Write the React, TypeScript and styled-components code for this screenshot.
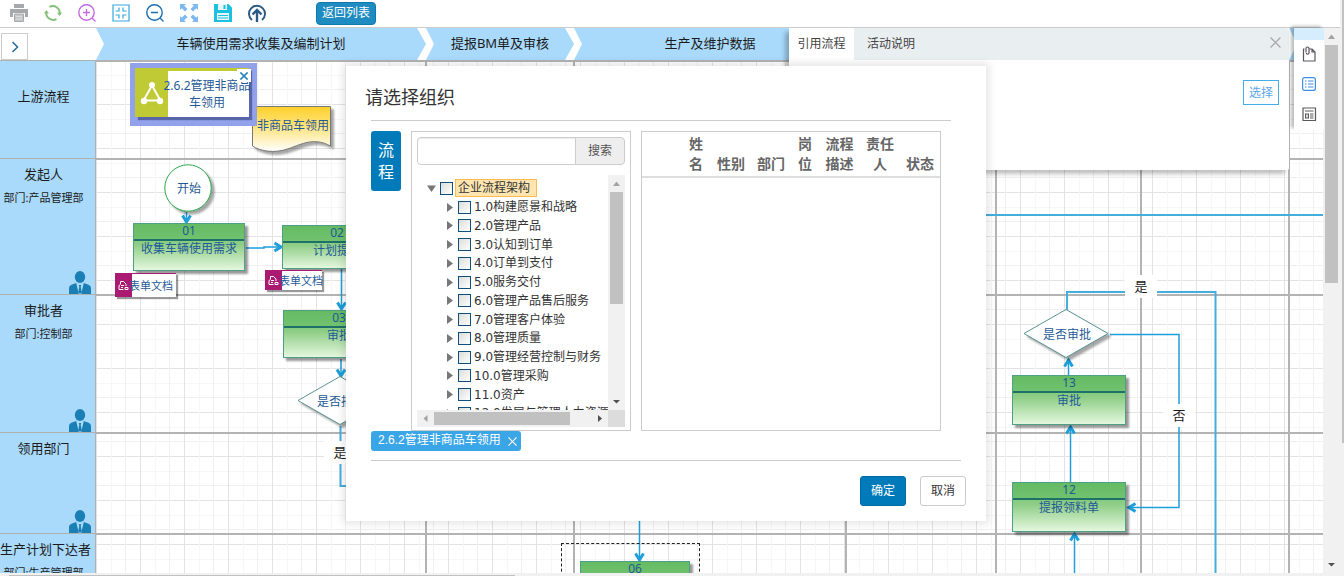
import React from "react";
import styled, { createGlobalStyle, css } from "styled-components";

const GlobalStyle = createGlobalStyle`
  *, *::before, *::after { box-sizing: border-box; }
  html, body, #root { height: 100%; }
  body {
    margin: 0;
    overflow: hidden;
    background: #fff;
    color: #333;
    font-family: "Noto Sans", "Noto Sans CJK SC", sans-serif;
    font-size: 12px;
  }
  button, input { font-family: inherit; }
  button { padding: 0; cursor: pointer; }
  h1, h2, h3, p, ul { margin: 0; padding: 0; font-weight: normal; }
`;

const blue = "#1c9fdb";

/* ---------- page frame ---------- */

const Page = styled.div`
  position: relative;
  display: grid;
  grid-template-columns: minmax(0, 1fr) 4px;
  grid-template-rows: minmax(0, 1fr) 3px;
  height: 100vh;
  background: #f1f1f1;
`;

const Workspace = styled.div`
  display: flex;
  flex-direction: column;
  background: #fff;
`;

const OuterTrack = styled.div`
  padding-left: 2px;
`;

const OuterThumb = styled.div`
  height: 443px;
  background: #c1c1c1;
`;

const BottomTrack = styled.div`
  padding: 2px 0 0 9px;
`;

const BottomThumb = styled.div`
  width: 506px;
  height: 1px;
  background: #c1c1c1;
`;

const Toolbar = styled.header`
  display: flex;
  align-items: center;
  flex: none;
  gap: 16px;
  height: 28px;
  padding: 0 0 1px 10px;
  border-bottom: 1px solid #ccc;
`;

const IconButton = styled.button`
  display: block;
  width: 18px;
  height: 18px;
  border: 0;
  background: none;
  svg { display: block; width: 18px; height: 18px; }
`;

const BackButton = styled.button`
  width: 60px;
  height: 23px;
  margin-left: 34px;
  border: 1px solid #0f79ad;
  border-radius: 4px;
  background: #1e8bc1;
  color: #fff;
  font-size: 12px;
  line-height: 20px;
`;

const Stage = styled.main`
  position: relative;
  display: flex;
  flex: 1;
  min-height: 0;
`;

/* ---------- swimlanes ---------- */

const LaneColumn = styled.aside`
  display: flex;
  flex-direction: column;
  flex: none;
  width: 96px;
  overflow: hidden;
`;

const Corner = styled.div`
  flex: none;
  height: 32px;
  padding: 5px 0 0 1px;
`;

const ExpandButton = styled.button`
  display: grid;
  place-items: center;
  width: 27px;
  height: 27px;
  border: 1px solid #ccc;
  background: #fff;
`;

const Lane = styled.section<{ $height: number }>`
  position: relative;
  flex: none;
  height: ${(p) => p.$height}px;
  padding-top: 5px;
  border: 1px solid #b0b0b0;
  border-width: 1px 1px 0 0;
  background: #a9dafb;
  color: #1b1b1b;
  text-align: center;
  white-space: nowrap;
`;

const LaneTitle = styled.h3<{ $low?: boolean }>`
  padding-right: 8px;
  margin-top: ${(p) => (p.$low ? 20 : 0)}px;
  font-size: 13px;
  line-height: 20px;
`;

const LaneDept = styled.p`
  padding-right: 8px;
  margin-top: 4px;
  font-size: 11px;
  line-height: 20px;
`;

const LanePerson = styled.svg`
  position: absolute;
  right: 4px;
  bottom: 0;
  width: 22px;
  height: 23px;
`;

const Board = styled.div`
  display: flex;
  flex-direction: column;
  flex: 1;
  min-width: 0;
  overflow: hidden;
`;

const Phases = styled.div`
  display: flex;
  flex: none;
  height: 32px;
`;

const Phase = styled.h3<{ $width: number }>`
  flex: none;
  width: ${(p) => p.$width + 8}px;
  margin-right: -8px;
  padding-right: 8px;
  background: #a9dafb;
  color: #1b1b1b;
  font-size: 13px;
  line-height: 31px;
  text-align: center;
  clip-path: polygon(0 0, calc(100% - 17px) 0, calc(100% - 8px) 50%, calc(100% - 17px) 100%, 0 100%, 8px 50%);
`;

const Diagram = styled.div`
  position: relative;
  flex: 1;
  overflow: hidden;
  background-image:
    repeating-linear-gradient(90deg, #e3e3e3 0 1px, transparent 1px 15px, #f7f7f7 15px 16px, transparent 16px 29px, #f0f0f0 29px 30px, transparent 30px 44px),
    repeating-linear-gradient(180deg, #e3e3e3 0 1px, transparent 1px 15px, #f7f7f7 15px 16px, transparent 16px 29px, #f0f0f0 29px 30px, transparent 30px 44px);
`;

const Wires = styled.svg`
  position: absolute;
  inset: 0;
  width: 1300px;
  height: 520px;
`;

type Box = { $x: number; $y: number; $w: number; $h: number };

const placed = css<Box>`
  position: absolute;
  left: ${(p) => p.$x}px;
  top: ${(p) => p.$y}px;
  width: ${(p) => p.$w}px;
  height: ${(p) => p.$h}px;
`;

const Activity = styled.div<Box>`
  ${placed}
  border: 1px solid #4f9f86;
  background: linear-gradient(#66bd63, #8fce87 45%, #e4f7de);
  box-shadow: 3px 3px 2px rgba(0, 0, 0, 0.4);
  color: #1f5a96;
  font-size: 12px;
  text-align: center;
`;

const ActivityNo = styled.div`
  height: 17px;
  border-bottom: 2px solid #1d7168;
  background: linear-gradient(#64bb62, #72c270);
  line-height: 14px;
`;

const ActivityName = styled.div`
  line-height: 16px;
  white-space: nowrap;
`;

const Shape = styled.div<Box>`
  ${placed}
  display: grid;
  place-items: center;
  padding: 2px 0 0 2px;
  color: #1f5a96;
  font-size: 12px;
  line-height: 16px;
  white-space: nowrap;
  svg {
    position: absolute;
    inset: 0;
    overflow: visible;
    filter: drop-shadow(3px 3px 1px rgba(0, 0, 0, 0.35));
  }
  span { position: relative; }
`;

const WireLabel = styled.span<Box>`
  ${placed}
  background: #fff;
  color: #1b1b1b;
  font-size: 13px;
  line-height: ${(p) => p.$h}px;
  text-align: center;
`;

const FormDoc = styled.div<Box>`
  ${placed}
  display: flex;
  border-top: 1px solid #aa1a72;
  background: #fff;
  box-shadow: 2px 2px 1px rgba(0, 0, 0, 0.4);
  color: #1f5a96;
  font-size: 11px;
  line-height: ${(p) => p.$h}px;
  white-space: nowrap;
`;

const FormDocIcon = styled.div`
  display: grid;
  place-items: center;
  flex: none;
  width: 17px;
  background: #aa1a72;
  svg { width: 11px; height: 11px; }
`;

const FormDocName = styled.span`
  margin-left: -3px;
`;

const Linked = styled.div<Box>`
  ${placed}
  border: 5px solid #91a1ea;
  border-width: 5px 8px 9px 5px;
`;

const LinkedBody = styled.div`
  display: flex;
  width: 114px;
  height: 49px;
  border-top: 3px solid #bfca34;
  background: #fff;
  box-shadow: 3px 3px 1px #5866a8;
  color: #1f5a96;
  font-size: 12px;
  line-height: 17px;
  text-align: center;
`;

const LinkedIcon = styled.div`
  display: grid;
  place-items: center;
  flex: none;
  width: 33px;
  margin-top: -3px;
  background: #bfca34;
`;

const LinkedName = styled.p`
  flex: 1;
  margin: 6px -3px 0 -6px;
  white-space: nowrap;
`;

const LinkedClose = styled.button`
  position: absolute;
  top: 1px;
  right: -2px;
  display: grid;
  place-items: center;
  width: 14px;
  height: 13px;
  border: 0;
  background: #fff;
`;

const Group = styled.div<Box>`
  ${placed}
  border: 1px dashed #222;
`;

/* ---------- scroll bars ---------- */

const VTrack = styled.div`
  display: flex;
  flex-direction: column;
  align-items: center;
  flex: none;
  width: 17px;
  background: #f1f1f1;
  svg { flex: none; width: 17px; height: 17px; }
`;

const VThumb = styled.div<{ $size: number }>`
  width: 13px;
  height: ${(p) => p.$size}px;
  margin-bottom: auto;
  background: #c1c1c1;
`;

const HTrack = styled.div`
  display: flex;
  align-items: center;
  flex: none;
  width: 191px;
  height: 17px;
  background: #f1f1f1;
  svg { flex: none; width: 17px; height: 17px; }
`;

const HThumb = styled.div`
  width: 136px;
  height: 13px;
  margin-right: auto;
  background: #c1c1c1;
`;

/* ---------- reference panel and side rail ---------- */

const RefPanel = styled.section`
  position: absolute;
  top: 0;
  right: 51px;
  width: 500px;
  border-radius: 2px 4px 2px 0;
  background: #fff;
  box-shadow: -4px 4px 4px rgba(0, 0, 0, 0.25);
`;

const TabBar = styled.div`
  display: flex;
  height: 32px;
  background: #e9eef1;
  border-radius: 2px 4px 0 0;
`;

const Tab = styled.button<{ $active?: boolean }>`
  width: ${(p) => (p.$active ? 65 : 74)}px;
  border: 0;
  background: ${(p) => (p.$active ? "#fff" : "transparent")};
  color: #444;
  font-size: 12px;
  line-height: 30px;
`;

const TabClose = styled.button`
  width: 28px;
  margin-left: auto;
  padding-bottom: 4px;
  border: 0;
  background: none;
  line-height: 0;
`;

const RefBody = styled.div`
  display: flex;
  justify-content: flex-end;
  height: 110px;
  padding: 20px 10px;
`;

const PickButton = styled.button`
  width: 36px;
  height: 25px;
  border: 1px solid #45ade6;
  background: #fff;
  color: #5aa7e8;
  font-size: 12px;
  line-height: 22px;
`;

const Rail = styled.nav`
  position: absolute;
  top: 0;
  right: 16px;
  display: flex;
  flex-direction: column;
  align-items: center;
  gap: 14px;
  width: 30px;
  height: 102px;
  padding-top: 6px;
  border-top: 12px solid #d6edfe;
  background: #fff;
  box-shadow: -3px -2px 3px rgba(0, 0, 0, 0.25);
`;

const RailButton = styled.button`
  width: 16px;
  height: 16px;
  border: 0;
  background: none;
  svg { display: block; width: 16px; height: 16px; }
`;

/* ---------- dialog ---------- */

const DialogLayer = styled.div`
  position: absolute;
  inset: 0;
  display: flex;
  justify-content: center;
  align-items: flex-start;
  padding: 66px 12px 0 0;
  pointer-events: none;
`;

const Dialog = styled.section`
  width: 640px;
  padding: 0 20px 15px 25px;
  background: #fff;
  box-shadow: 0 0 8px 3px rgba(0, 0, 0, 0.1);
  pointer-events: auto;
`;

const DialogTitle = styled.h2`
  height: 55px;
  margin-right: 15px;
  border-bottom: 1px solid #ccc;
  color: #333;
  font-size: 18px;
  line-height: 62px;
  text-indent: -6px;
`;

const DialogBody = styled.div`
  display: flex;
  gap: 10px;
  padding-top: 10px;
`;

const KindTab = styled.button`
  width: 30px;
  height: 60px;
  padding: 0 6px;
  border: 0;
  border-radius: 3px;
  background: #007ab8;
  color: #fff;
  font-size: 16px;
  line-height: 22px;
`;

const TreePanel = styled.div`
  width: 220px;
  height: 300px;
  padding: 5px;
  border: 1px solid #ccc;
`;

const Search = styled.form`
  display: flex;
  width: 208px;
  height: 28px;
`;

const SearchInput = styled.input`
  flex: 1;
  min-width: 0;
  border: 1px solid #ccc;
  border-radius: 4px 0 0 4px;
  box-shadow: inset 0 1px 1px rgba(0, 0, 0, 0.08);
`;

const SearchButton = styled.button`
  width: 50px;
  margin-left: -1px;
  border: 1px solid #ccc;
  border-radius: 0 4px 4px 0;
  background: #eee;
  color: #555;
  font-size: 12px;
  line-height: 24px;
`;

const TreeView = styled.div`
  display: grid;
  grid-template-columns: 191px 17px;
  grid-template-rows: 235px 17px;
  margin-top: 10px;
`;

const TreeClip = styled.div`
  overflow: hidden;
  padding: 4px 0 0 10px;
  color: #333;
  font-family: "DejaVu Sans", "Noto Sans CJK SC", sans-serif;
`;

const ScrollCorner = styled.div`
  background: #dcdcdc;
`;

const TreeRow = styled.label`
  display: flex;
  align-items: center;
  height: 18px;
  font-size: 12px;
  line-height: 16px;
  white-space: nowrap;
  svg { flex: none; width: 9px; height: 9px; margin-right: 4px; }
`;

const TreeList = styled.ul`
  display: grid;
  grid-template-rows: repeat(12, 1fr);
  height: 226px;
  padding: 1px 0 0 18px;
  list-style: none;
`;

const Check = styled.input`
  appearance: none;
  flex: none;
  width: 13px;
  height: 13px;
  margin: 0 3px 0 0;
  border: 1px solid #0d4f7d;
  background: linear-gradient(135deg, #dcdcd8, #fff);
`;

const RootName = styled.span`
  height: 18px;
  padding: 0 6px 0 2px;
  margin-left: -1px;
  border: 1px solid #ffb951;
  background: #ffe6b0;
`;

const TablePanel = styled.div`
  width: 300px;
  height: 300px;
  border: 1px solid #ccc;
`;

const PeopleTable = styled.table`
  width: 100%;
  table-layout: fixed;
  border-collapse: collapse;
  th {
    height: 45px;
    padding: 1px 6px 2px;
    border-bottom: 2px solid #ddd;
    color: #666;
    font-size: 14px;
    font-weight: bold;
    line-height: 20px;
    text-align: center;
    vertical-align: bottom;
    word-break: break-all;
  }
`;

const Chosen = styled.div`
  display: flex;
  height: 30px;
  margin-right: 5px;
  padding-bottom: 9px;
  border-bottom: 1px solid #ccc;
`;

const Tag = styled.span`
  display: flex;
  align-items: center;
  gap: 7px;
  width: 150px;
  height: 20px;
  padding-left: 7px;
  border-radius: 3px;
  background: #3aa6e8;
  color: #fff;
  font-family: "Liberation Sans", "Noto Sans CJK SC", sans-serif;
  line-height: 18px;
  white-space: nowrap;
`;

const TagText = styled.span`
  height: 20px;
`;

const TagClose = styled.button`
  width: 10px;
  height: 10px;
  border: 0;
  background: none;
  line-height: 0;
`;

const Actions = styled.footer`
  display: flex;
  justify-content: flex-end;
  gap: 14px;
  padding-top: 15px;
`;

const ActionButton = styled.button<{ $primary?: boolean }>`
  width: 46px;
  height: 30px;
  border: 1px solid ${(p) => (p.$primary ? "#006ca3" : "#ccc")};
  border-radius: 3px;
  background: ${(p) => (p.$primary ? "#007ab8" : "#fff")};
  color: ${(p) => (p.$primary ? "#fff" : "#333")};
  font-size: 12px;
  line-height: 26px;
`;

/* ---------- icons ---------- */

const Cross = ({ size, color, width = 1.2 }: { size: number; color: string; width?: number }) => (
  <svg width={size} height={size} viewBox="0 0 10 10" stroke={color} strokeWidth={width} fill="none">
    <path d="M0.5 0.5 9.5 9.5M9.5 0.5 0.5 9.5" />
  </svg>
);

const arrowPaths = {
  up: "M8.5 6.5 12 11H5Z",
  down: "M5 7h7L8.500 10.500Z",
  left: "M10.500 5v7L6.500 8.500Z",
  right: "M7 5v7L11 8.500Z",
};

const ScrollArrow = ({ dir, color }: { dir: keyof typeof arrowPaths; color: string }) => (
  <svg viewBox="0 0 17 17" fill={color}>
    <path d={arrowPaths[dir]} />
  </svg>
);

const Person = () => (
  <LanePerson viewBox="0 0 22 23" fill="#1a7fb5">
    <ellipse cx="11" cy="6" rx="5.200" ry="6" />
    <path d="M0 23v-6q0-2.500 2.500-3.300L7.200 12 9.800 23ZM22 23v-6q0-2.500-2.500-3.300L14.800 12 12.200 23ZM9.800 14h2.400l-.5 2 1 5-1.700 2-1.700-2 1-5Z" />
  </LanePerson>
);

const tools = [
  {
    name: "打印",
    icon: (
      <svg viewBox="0 0 18 18">
        <path d="M4 0h10v4H4ZM0 5h18v8h-3V9H3v4H0Z" fill="#a6a8a9" />
        <path d="M4.500 10h9v7.500h-9Z" fill="#c4c6c8" stroke="#a6a8a9" />
        <path d="M6 12.500h6M6 15h6" stroke="#ddd" />
      </svg>
    ),
  },
  {
    name: "刷新",
    icon: (
      <svg viewBox="0 0 18 18" fill="none" stroke="#82c079" strokeWidth="1.800">
        <path d="M5.500 2.900A7 7 0 0 1 15.800 9.500M12.500 15.100A7 7 0 0 1 2.200 8.500" />
        <path d="M0 9.500 2.400 6 5 9.200ZM13 8.800 18 8.500 15.700 12Z" fill="#82c079" stroke="none" />
      </svg>
    ),
  },
  {
    name: "放大",
    icon: (
      <svg viewBox="0 0 18 18" fill="none" stroke="#c468e6" strokeWidth="1.400">
        <circle cx="8.500" cy="8.500" r="7.700" />
        <path d="M8.500 5v7M5 8.500h7M14 14l3.500 3.500" />
      </svg>
    ),
  },
  {
    name: "实际大小",
    icon: (
      <svg viewBox="0 0 18 18" fill="none" stroke="#35a7e0" strokeWidth="1.200">
        <path d="M1 1h16v16H1ZM7 3.500V7H3.500M11 3.500V7H14.500M7 14.500V11H3.500M11 14.500V11H14.500" />
      </svg>
    ),
  },
  {
    name: "缩小",
    icon: (
      <svg viewBox="0 0 18 18" fill="none" stroke="#1c6fae" strokeWidth="1.400">
        <circle cx="8.500" cy="8.500" r="7.700" />
        <path d="M5 8.500h7M14 14l3.500 3.500" />
      </svg>
    ),
  },
  {
    name: "全屏",
    icon: (
      <svg viewBox="0 0 18 18" fill="#7db8ef">
        <path d="M0 0h6L4.200 1.800 7.500 5 5 7.500 1.800 4.200 0 6ZM18 0v6l-1.800-1.800L13 7.500 10.500 5l3.300-3.200L12 0ZM0 18v-6l1.800 1.800L5 10.500 7.500 13l-3.300 3.200L6 18ZM18 18h-6l1.800-1.800L10.500 13l2.500-2.500 3.200 3.300L18 12Z" />
      </svg>
    ),
  },
  {
    name: "保存",
    icon: (
      <svg viewBox="0 0 18 18">
        <path d="M0 0h14.500L18 3.500V18H0Z" fill="#1cc0e0" />
        <path d="M4 0h9v6H4ZM3 9h12v7H3Z" fill="#e6f6fa" />
        <path d="M9.500 1h2v4h-2ZM4 11h10v1H4ZM4 13.500h10v1H4Z" fill="#1cc0e0" />
      </svg>
    ),
  },
  {
    name: "发布",
    icon: (
      <svg viewBox="0 0 18 18" fill="none" stroke="#2c5a84" strokeWidth="1.900">
        <path d="M4 16A8 8 0 1 1 14 16" />
        <path d="M9 18V6M4.500 10.500 9 6l4.500 4.500" strokeWidth="2.400" />
      </svg>
    ),
  },
];

const railIcons = [
  {
    name: "附件",
    icon: (
      <svg viewBox="0 0 16 16" fill="none" stroke="#5a5560" strokeWidth="1.200">
        <path d="M3.500 3H2.500v12h11.500V6L11 3H8M11 3v3h3" />
        <path d="M5 6.500V2.500Q5 1 6.500 1T8 2.500V7q0 1.200-1.300 1.200T5.300 7" />
      </svg>
    ),
  },
  {
    name: "列表",
    icon: (
      <svg viewBox="0 0 16 16" fill="none" stroke="#3f8fe8" strokeWidth="1.200">
        <rect x="1.600" y="1.600" width="12.800" height="12.800" rx="2" />
        <path d="M4 5h1.500M7 5h5.500M4 8h1.500M7 8h5.500M4 11h1.500M7 11h5.500" />
      </svg>
    ),
  },
  {
    name: "表单",
    icon: (
      <svg viewBox="0 0 16 16" fill="none" stroke="#5a5a5a" strokeWidth="1.200">
        <path d="M2 2h12.500v12.500H2ZM4 5h8.500M4.600 8h2.800v4H4.600ZM9 8h3.500M9 10h3.500M9 12h3.500" />
      </svg>
    ),
  },
];

const DocGlyph = () => (
  <svg viewBox="0 0 11 11" fill="none" stroke="#fff">
    <path d="M2.500 4V1.500h3L8 4v2M1 9.500V5.500l1.500-1M1 9.500h4.500M3 5.500h3M3 7.500h2M7 7.500h3v2H7Z" />
  </svg>
);

/* ---------- data ---------- */

const lanes = [
  { title: "上游流程", height: 98, person: false },
  { title: "发起人", dept: "部门:产品管理部", height: 136, person: true },
  { title: "审批者", dept: "部门:控制部", height: 138, person: true },
  { title: "领用部门", height: 101, person: true },
  { title: "生产计划下达者", dept: "部门:生产管理部", height: 120, person: false },
];

const laneLines = [0, 98, 234, 372, 473];
const phaseLines = [330, 478, 750, 900, 1045, 1193];

const phases = [
  { title: "车辆使用需求收集及编制计划", width: 330 },
  { title: "提报BM单及审核", width: 148 },
  { title: "生产及维护数据", width: 272 },
  { title: "", width: 443 },
  { title: "", width: 300 },
];

const activities = [
  { no: "01", name: "收集车辆使用需求", x: 37, y: 163, w: 112, h: 48 },
  { no: "02", name: "计划提报", x: 186, y: 165, w: 110, h: 44 },
  { no: "03", name: "审批", x: 187, y: 250, w: 112, h: 48 },
  { no: "13", name: "审批", x: 916, y: 315, w: 114, h: 50 },
  { no: "12", name: "提报领料单", x: 916, y: 422, w: 114, h: 50 },
  { no: "06", name: "", x: 484, y: 501, w: 110, h: 48 },
];

const wires = [
  "M90.500 152V162",
  "M150 188H168V187H185",
  "M245.500 209V249",
  "M245 299V316",
  "M543.500 440V500",
  "M974.500 422V367",
  "M972.500 315V300",
  "M978.500 520V474",
  "M1014 274.500H1083V447.500H1033",
];

const plainWires = ["M244.500 366V426H330", "M971 250V232H1119.500V520", "M880 155H1300"];

const treeItems = [
  "1.0构建愿景和战略",
  "2.0管理产品",
  "3.0认知到订单",
  "4.0订单到支付",
  "5.0服务交付",
  "6.0管理产品售后服务",
  "7.0管理客户体验",
  "8.0管理质量",
  "9.0管理经营控制与财务",
  "10.0管理采购",
  "11.0资产",
  "12.0发展与管理人力资源",
];

const columns = [
  { title: "", width: 39 },
  { title: "姓名", width: 30 },
  { title: "性别", width: 40 },
  { title: "部门", width: 40 },
  { title: "岗位", width: 28 },
  { title: "流程描述", width: 41 },
  { title: "责任人", width: 40 },
  { title: "状态", width: 40 },
];

/* ---------- parts ---------- */

const Diamond = ({ x, y, text }: { x: number; y: number; text: string }) => (
  <Shape $x={x} $y={y} $w={86} $h={50}>
    <svg width="86" height="50" viewBox="0 0 86 50">
      <path d="M1 24.500 43 0.500 85 24.500 43 48.500Z" fill="#fff" stroke="#5a9494" />
    </svg>
    <span>{text}</span>
  </Shape>
);

const FlowDiagram = () => (
  <Diagram>
    <Wires viewBox="0 0 1300 520" fill="none">
      <defs>
        <marker id="head" markerUnits="userSpaceOnUse" markerWidth="14" markerHeight="14" refX="8" refY="7" orient="auto">
          <path d="M1.500 3 8 7 1.500 11" fill="none" stroke={blue} strokeWidth="3" />
        </marker>
      </defs>
      {laneLines.map((y) => (
        <path key={y} d={`M0 ${y + 1}H1300`} stroke="#b3b3b3" strokeWidth="2" />
      ))}
      {phaseLines.map((x) => (
        <path key={x} d={`M${x} 0V520`} stroke="#b3b3b3" strokeWidth="2" />
      ))}
      {plainWires.map((d) => (
        <path key={d} d={d} stroke="#45aedd" strokeWidth="2" />
      ))}
      {wires.map((d) => (
        <path key={d} d={d} stroke={blue} strokeWidth="1.500" markerEnd="url(#head)" />
      ))}
    </Wires>

    <Group $x={465} $y={483} $w={139} $h={80} />

    {activities.map((a) => (
      <Activity key={a.no} $x={a.x} $y={a.y} $w={a.w} $h={a.h}>
        <ActivityNo>{a.no}</ActivityNo>
        <ActivityName>{a.name}</ActivityName>
      </Activity>
    ))}

    <Shape $x={156} $y={46} $w={80} $h={37}>
      <svg width="80" height="46" viewBox="0 0 80 46">
        <defs>
          <linearGradient id="paper" x1="0" y1="0" x2="0" y2="1">
            <stop offset="0" stopColor="#ffd02a" />
            <stop offset="0.500" stopColor="#ffe688" />
            <stop offset="1" stopColor="#fff" />
          </linearGradient>
        </defs>
        <path d="M.5 .5H78.500V40C62 31 50 38 37 42.500 22 48 8 45 .5 40Z" fill="url(#paper)" stroke="#777" />
      </svg>
      <span>非商品车领用</span>
    </Shape>

    <Shape $x={68} $y={104} $w={48} $h={48}>
      <svg width="48" height="48" viewBox="0 0 48 48">
        <circle cx="24" cy="24" r="23.200" fill="#fff" stroke="#2bac4c" />
      </svg>
      <span>开始</span>
    </Shape>

    <Diamond x={201} y={316} text="是否批准" />
    <Diamond x={927} y={249} text="是否审批" />

    <FormDoc $x={19} $y={213} $w={61} $h={24}>
      <FormDocIcon><DocGlyph /></FormDocIcon>
      <FormDocName>表单文档</FormDocName>
    </FormDoc>
    <FormDoc $x={169} $y={210} $w={57} $h={20}>
      <FormDocIcon><DocGlyph /></FormDocIcon>
      <FormDocName>表单文档</FormDocName>
    </FormDoc>

    <Linked $x={34} $y={3} $w={127} $h={63}>
      <LinkedBody>
        <LinkedIcon>
          <svg width="24" height="24" viewBox="0 0 24 24" fill="#fff">
            <path d="M12 4.500 3.500 19.500H20.500Z" fill="none" stroke="#fff" strokeWidth="2" />
            <circle cx="12" cy="4" r="3" />
            <circle cx="4" cy="20" r="3.200" />
            <circle cx="20" cy="20" r="3.200" />
          </svg>
        </LinkedIcon>
        <LinkedName>
          2.6.2管理非商品
          <br />
          车领用
        </LinkedName>
      </LinkedBody>
      <LinkedClose aria-label="移除">
        <Cross size={8} color="#2a86bb" width={2} />
      </LinkedClose>
    </Linked>

    <WireLabel $x={228} $y={381} $w={32} $h={23}>是</WireLabel>
    <WireLabel $x={1029} $y={215} $w={32} $h={23}>是</WireLabel>
    <WireLabel $x={1067} $y={344} $w={32} $h={23}>否</WireLabel>
  </Diagram>
);

const TreeArrow = ({ open }: { open?: boolean }) => (
  <svg viewBox="0 0 9 9" fill="#777">
    <path d={open ? "M0 1.500h9L4.500 8Z" : "M2 0v9L8 4.500Z"} />
  </svg>
);

const PickDialog = () => (
  <DialogLayer>
    <Dialog role="dialog" aria-labelledby="dialog-title">
      <DialogTitle id="dialog-title">请选择组织</DialogTitle>
      <DialogBody>
        <KindTab>流程</KindTab>
        <TreePanel>
          <Search onSubmit={(e) => e.preventDefault()}>
            <SearchInput type="text" aria-label="搜索关键字" />
            <SearchButton type="submit">搜索</SearchButton>
          </Search>
          <TreeView>
            <TreeClip>
              <TreeRow>
                <TreeArrow open />
                <Check type="checkbox" />
                <RootName>企业流程架构</RootName>
              </TreeRow>
              <TreeList>
                {treeItems.map((name) => (
                  <li key={name}>
                    <TreeRow>
                      <TreeArrow />
                      <Check type="checkbox" />
                      {name}
                    </TreeRow>
                  </li>
                ))}
              </TreeList>
            </TreeClip>
            <VTrack>
              <ScrollArrow dir="up" color="#a3a3a3" />
              <VThumb $size={112} />
              <ScrollArrow dir="down" color="#505050" />
            </VTrack>
            <HTrack>
              <ScrollArrow dir="left" color="#a3a3a3" />
              <HThumb />
              <ScrollArrow dir="right" color="#505050" />
            </HTrack>
            <ScrollCorner />
          </TreeView>
        </TreePanel>
        <TablePanel>
          <PeopleTable>
            <colgroup>
              {columns.map((c) => (
                <col key={c.title} width={c.width} />
              ))}
            </colgroup>
            <thead>
              <tr>
                {columns.map((c) => (
                  <th key={c.title} scope="col">{c.title}</th>
                ))}
              </tr>
            </thead>
          </PeopleTable>
        </TablePanel>
      </DialogBody>
      <Chosen>
        <Tag>
          <TagText>2.6.2管理非商品车领用</TagText>
          <TagClose aria-label="移除"><Cross size={9} color="#fff" /></TagClose>
        </Tag>
      </Chosen>
      <Actions>
        <ActionButton $primary>确定</ActionButton>
        <ActionButton>取消</ActionButton>
      </Actions>
    </Dialog>
  </DialogLayer>
);

export default function App() {
  return (
    <>
      <GlobalStyle />
      <Page>
        <Workspace>
          <Toolbar>
            {tools.map((t) => (
              <IconButton key={t.name} aria-label={t.name}>{t.icon}</IconButton>
            ))}
            <BackButton>返回列表</BackButton>
          </Toolbar>
          <Stage>
            <LaneColumn>
              <Corner>
                <ExpandButton aria-label="展开">
                  <svg width="8" height="12" viewBox="0 0 8 12" fill="none" stroke="#2f6c9c" strokeWidth="1.600">
                    <path d="M1.500 1 6.500 6 1.500 11" />
                  </svg>
                </ExpandButton>
              </Corner>
              {lanes.map((lane, i) => (
                <Lane key={lane.title} $height={lane.height}>
                  <LaneTitle $low={i === 0}>{lane.title}</LaneTitle>
                  {lane.dept && <LaneDept>{lane.dept}</LaneDept>}
                  {lane.person && <Person />}
                </Lane>
              ))}
            </LaneColumn>
            <Board>
              <Phases>
                {phases.map((p, i) => (
                  <Phase key={i} $width={p.width}>{p.title}</Phase>
                ))}
              </Phases>
              <FlowDiagram />
            </Board>
            <VTrack>
              <ScrollArrow dir="up" color="#a3a3a3" />
              <VThumb $size={238} />
              <ScrollArrow dir="down" color="#505050" />
            </VTrack>
            <RefPanel>
              <TabBar>
                <Tab $active>引用流程</Tab>
                <Tab>活动说明</Tab>
                <TabClose aria-label="关闭">
                  <Cross size={11} color="#aaa" />
                </TabClose>
              </TabBar>
              <RefBody>
                <PickButton>选择</PickButton>
              </RefBody>
            </RefPanel>
            <Rail>
              {railIcons.map((r) => (
                <RailButton key={r.name} aria-label={r.name}>{r.icon}</RailButton>
              ))}
            </Rail>
          </Stage>
        </Workspace>
        <OuterTrack>
          <OuterThumb />
        </OuterTrack>
        <BottomTrack>
          <BottomThumb />
        </BottomTrack>
        <PickDialog />
      </Page>
    </>
  );
}
